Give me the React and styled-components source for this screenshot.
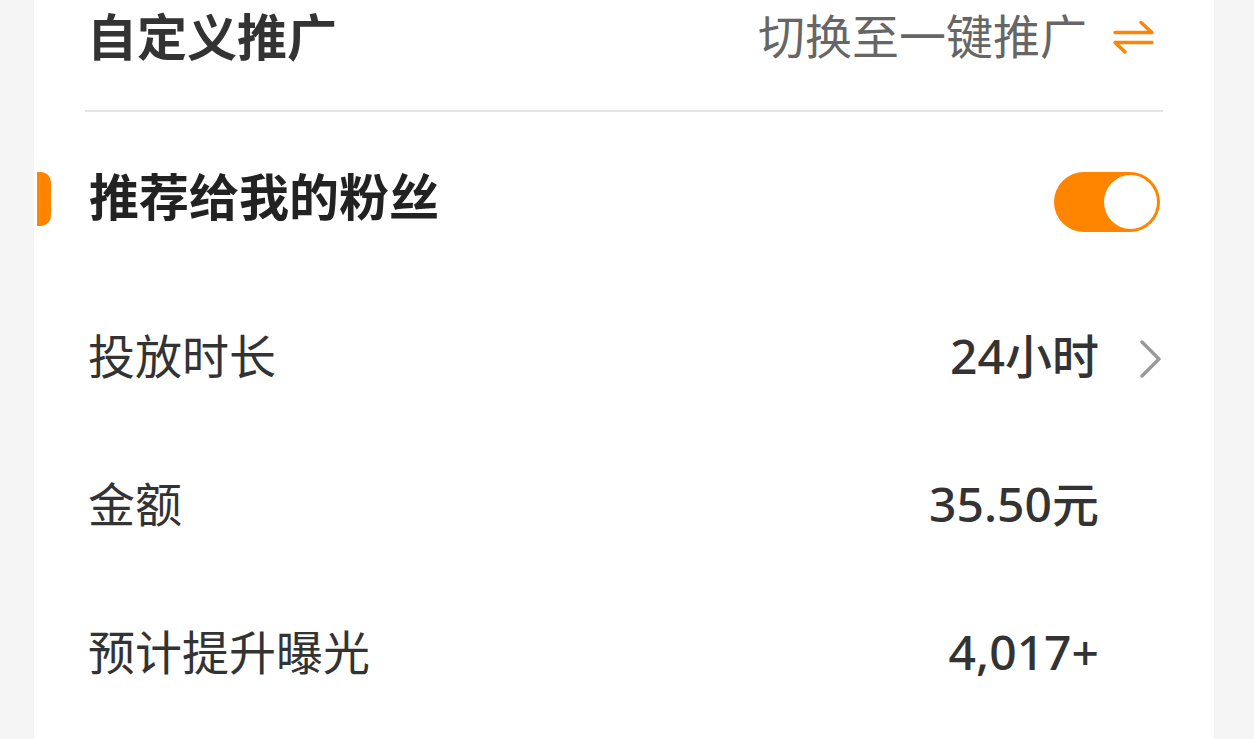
import React, { useState } from 'react';
import styled, { createGlobalStyle } from 'styled-components';

const cjk = '"Noto Sans CJK SC", sans-serif';

const GlobalStyle = createGlobalStyle`
  * { box-sizing: border-box; }
  body {
    margin: 0;
    background: #f5f5f5;
    color: #333;
    font-family: ${cjk};
  }
  button {
    margin: 0;
    padding: 0;
    border: 0;
    background: none;
    color: inherit;
    font: inherit;
    cursor: pointer;
  }
`;

const Panel = styled.main`
  min-height: 100vh;
  margin: 0 40px 0 34px;
  background: #fff;
`;

const Header = styled.header`
  display: flex;
  align-items: center;
  justify-content: space-between;
  margin: 0 51px;
  padding: 0 8px 42px 2px;
  border-bottom: 2px solid #e5e5e5;
  line-height: 68px;
  white-space: nowrap;
`;

const Title = styled.h1`
  margin: 0;
  font-size: 50px;
  font-weight: 700;
`;

const SwitchMode = styled.button`
  display: flex;
  align-items: center;
  gap: 24px;
  && {
    color: #666;
    font-size: 47px;
    line-height: 68px;
  }
`;

const Section = styled.div`
  display: flex;
  align-items: flex-start;
  padding: 60px 54px 48px 3px;
`;

const Marker = styled.span`
  width: 14px;
  height: 54px;
  border-radius: 0 10px 10px 0;
  background: #ff8400;
`;

const SectionTitle = styled.label`
  flex: 1;
  margin-left: 38px;
  color: #222;
  font-size: 50px;
  font-weight: 700;
  line-height: 44px;
`;

const Toggle = styled.input`
  appearance: none;
  display: flex;
  justify-content: flex-start;
  width: 106px;
  height: 60px;
  margin: 0;
  padding: 3px;
  border-radius: 30px;
  background: #ccc;
  cursor: pointer;
  &::before {
    content: '';
    width: 53px;
    height: 54px;
    border-radius: 50%;
    background: #fff;
  }
  &:checked {
    justify-content: flex-end;
    background: #ff8400;
  }
`;

const Row = styled.div`
  display: flex;
  align-items: center;
  justify-content: space-between;
  width: 100%;
  height: 148px;
  padding: 0 ${(p) => (p.$arrow ? 52 : 115)}px 0 54px;
  font-size: 47px;
  line-height: 68px;
  white-space: nowrap;
`;

const RowButton = styled.button`
  display: flex;
  align-items: center;
  gap: 37px;
`;

const Value = styled.span`
  padding-top: 3px;
  font-family: "Noto Sans", ${cjk};
  font-weight: 500;
`;

const Digits = styled.span`
  font-size: 48px;
`;

const Icon = styled.svg`
  display: block;
  flex: none;
  fill: none;
  stroke-linecap: round;
  stroke-linejoin: round;
`;

function Amount({ number, unit }) {
  return (
    <Value>
      <Digits>{number}</Digits>
      {unit}
    </Value>
  );
}

export default function App() {
  const [on, setOn] = useState(true);
  return (
    <>
      <GlobalStyle />
      <Panel>
        <Header>
          <Title>自定义推广</Title>
          <SwitchMode type="button">
            切换至一键推广
            <Icon width="44" height="40" viewBox="0 0 44 40" stroke="#ff8400" strokeWidth="3.4" aria-hidden="true">
              <path d="M4 18.5H41L30 8.500M41 28.500H4L14 38" />
            </Icon>
          </SwitchMode>
        </Header>
        <Section>
          <Marker />
          <SectionTitle htmlFor="fans">推荐给我的粉丝</SectionTitle>
          <Toggle id="fans" type="checkbox" role="switch" checked={on} onChange={() => setOn(!on)} />
        </Section>
        <Row $arrow>
          <span>投放时长</span>
          <RowButton type="button">
            <Amount number="24" unit="小时" />
            <Icon width="26" height="48" viewBox="0 0 26 48" stroke="#999" strokeWidth="3.4" aria-hidden="true">
              <path d="M6 12L23 29L6 46" />
            </Icon>
          </RowButton>
        </Row>
        <Row>
          <span>金额</span>
          <Amount number="35.50" unit="元" />
        </Row>
        <Row>
          <span>预计提升曝光</span>
          <Amount number="4,017+" />
        </Row>
      </Panel>
    </>
  );
}
